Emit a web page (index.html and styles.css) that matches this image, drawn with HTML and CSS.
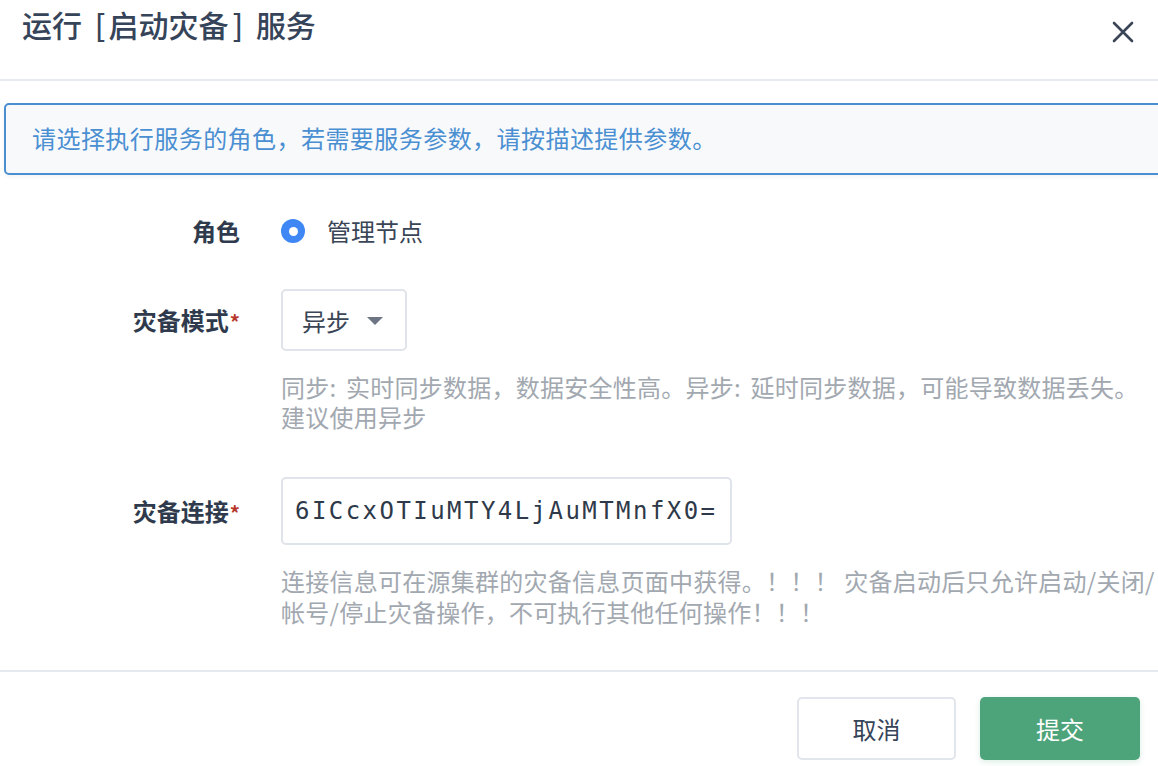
FILE: index.html
```html
<!DOCTYPE html>
<html lang="zh-CN">
<head>
<meta charset="utf-8">
<title>运行 [启动灾备] 服务</title>
<link rel="stylesheet" href="styles.css">
</head>
<body>
<div class="dialog">
  <header class="dlg-header">
    <h1 class="dlg-title">运行 <span class="br-l">[</span>启动灾备<span class="br-r">]</span> 服务</h1>
    <button class="dlg-close" aria-label="关闭">
      <svg width="22" height="22" viewBox="0 0 22 22"><path d="M2 2 L20 20 M20 2 L2 20" stroke="#3a4658" stroke-width="2.6" stroke-linecap="round" fill="none"/></svg>
    </button>
  </header>

  <div class="alert">请选择执行服务的角色，若需要服务参数，请按描述提供参数。</div>

  <form class="form">
    <div class="row row-role">
      <div class="label">角色</div>
      <div class="control">
        <label class="radio"><span class="radio-dot"></span><span class="radio-text">管理节点</span></label>
      </div>
    </div>

    <div class="row row-mode">
      <div class="label">灾备模式<span class="req">*</span></div>
      <div class="control">
        <div class="select"><span class="select-val">异步</span><span class="caret"></span></div>
        <div class="help help-mode">同步: 实时同步数据，数据安全性高。异步: 延时同步数据，可能导致数据丢失。建议使用异步</div>
      </div>
    </div>

    <div class="row row-link">
      <div class="label">灾备连接<span class="req">*</span></div>
      <div class="control">
        <div class="input"><span class="input-val">6ICcxOTIuMTY4LjAuMTMnfX0=</span></div>
        <div class="help help-link">连接信息可在源集群的灾备信息页面中获得。！！！ 灾备启动后只允许启动/关闭/帐号/停止灾备操作，不可执行其他任何操作！！！</div>
      </div>
    </div>
  </form>

  <footer class="dlg-footer">
    <button class="btn btn-cancel">取消</button>
    <button class="btn btn-primary">提交</button>
  </footer>
</div>
</body>
</html>
```

FILE: styles.css
```css
html, body {
  margin: 0;
  padding: 0;
  background: #ffffff;
  overflow: hidden;
}
body {
  width: 1158px;
  height: 766px;
  font-family: "Noto Sans CJK SC", "Noto Sans", sans-serif;
  color: #3a4556;
}
.dialog {
  display: flex;
  flex-direction: column;
  width: 1158px;
}
.dlg-header {
  height: 79px;
  border-bottom: 2px solid #e6e9ee;
  display: flex;
  justify-content: space-between;
  align-items: flex-start;
  padding: 0 23px 0 22px;
}
.dlg-title {
  margin: 0;
  padding-top: 4px;
  font-size: 30px;
  line-height: 40px;
  font-weight: 500;
  color: #36445a;
  word-spacing: 6px;
}
.br-l {
  padding-right: 3px;
}
.br-r {
  padding-left: 4px;
}
.dlg-close {
  margin-top: 20px;
  width: 24px;
  height: 24px;
  padding: 0;
  border: 0;
  background: transparent;
  display: flex;
  align-items: center;
  justify-content: center;
}
.alert {
  margin: 22px -30px 0 4px;
  height: 68px;
  border: 2px solid #4a8fcf;
  border-radius: 5px;
  background: #f8f9fb;
  box-shadow: 0 2px 4px rgba(0,0,0,0.05);
  color: #4a8fd2;
  font-size: 24px;
  letter-spacing: 0.45px;
  line-height: 66px;
  padding-left: 26px;
  white-space: nowrap;
}
.form {
  display: flex;
  flex-direction: column;
  margin: 0;
}
.row {
  display: grid;
  grid-template-columns: 240px 1fr;
  column-gap: 41px;
}
.label {
  text-align: right;
  font-size: 24px;
  font-weight: 700;
  color: #2f3b4d;
}
.req {
  color: #b8372c;
  font-weight: 700;
  font-size: 20px;
  margin-left: 1px;
}
.row-role {
  margin-top: 36px;
  height: 40px;
  align-items: center;
  line-height: 40px;
}
.radio {
  display: flex;
  align-items: center;
  gap: 22px;
}
.radio-dot {
  width: 24px;
  height: 24px;
  border-radius: 50%;
  background: #3e87f5;
  box-sizing: border-box;
  display: flex;
  align-items: center;
  justify-content: center;
}
.radio-dot::after {
  content: "";
  width: 9px;
  height: 9px;
  border-radius: 50%;
  background: #ffffff;
}
.radio-text {
  font-size: 24px;
  color: #3a4556;
}
.row-mode {
  margin-top: 38px;
}
.row-mode .label {
  line-height: 62px;
}
.select {
  width: 126px;
  height: 62px;
  box-sizing: border-box;
  border: 2px solid #dfe3ea;
  border-radius: 5px;
  display: flex;
  align-items: center;
  justify-content: space-between;
  padding: 0 22px 0 19px;
}
.select-val {
  font-size: 24px;
  color: #3a4556;
}
.caret {
  width: 0;
  height: 0;
  border-left: 8px solid transparent;
  border-right: 8px solid transparent;
  border-top: 8px solid #6b7583;
  margin-top: 2px;
}
.help {
  margin-top: 21px;
  font-size: 24px;
  line-height: 30px;
  color: #a2a8b0;
  letter-spacing: 0.25px;
}
.help-mode {
  word-spacing: 4px;
}
.row-link {
  margin-top: 45px;
}
.row-link .label {
  line-height: 68px;
}
.input {
  width: 451px;
  height: 68px;
  box-sizing: border-box;
  border: 2px solid #dfe3ea;
  border-radius: 5px;
  display: flex;
  align-items: center;
  padding-left: 12px;
  overflow: hidden;
}
.input-val {
  font-family: "DejaVu Sans Mono", monospace;
  font-size: 24px;
  letter-spacing: 2.45px;
  color: #2e3949;
  white-space: nowrap;
}
.help-link {
  margin-top: 20px;
  line-height: 31px;
}
.dlg-footer {
  margin-top: 43px;
  border-top: 2px solid #e6e9ee;
  display: flex;
  justify-content: flex-end;
  gap: 24px;
  padding: 25px 18px 0 0;
}
.btn {
  height: 63px;
  border-radius: 5px;
  font-family: "Noto Sans CJK SC", "Noto Sans", sans-serif;
  font-size: 24px;
  cursor: pointer;
}
.btn-cancel {
  width: 159px;
  background: #ffffff;
  border: 2px solid #e1e5ec;
  color: #36445a;
}
.btn-primary {
  width: 160px;
  background: #4da47a;
  border: 0;
  color: #ffffff;
  box-shadow: 0 2px 6px rgba(77,164,122,0.2);
}
```
